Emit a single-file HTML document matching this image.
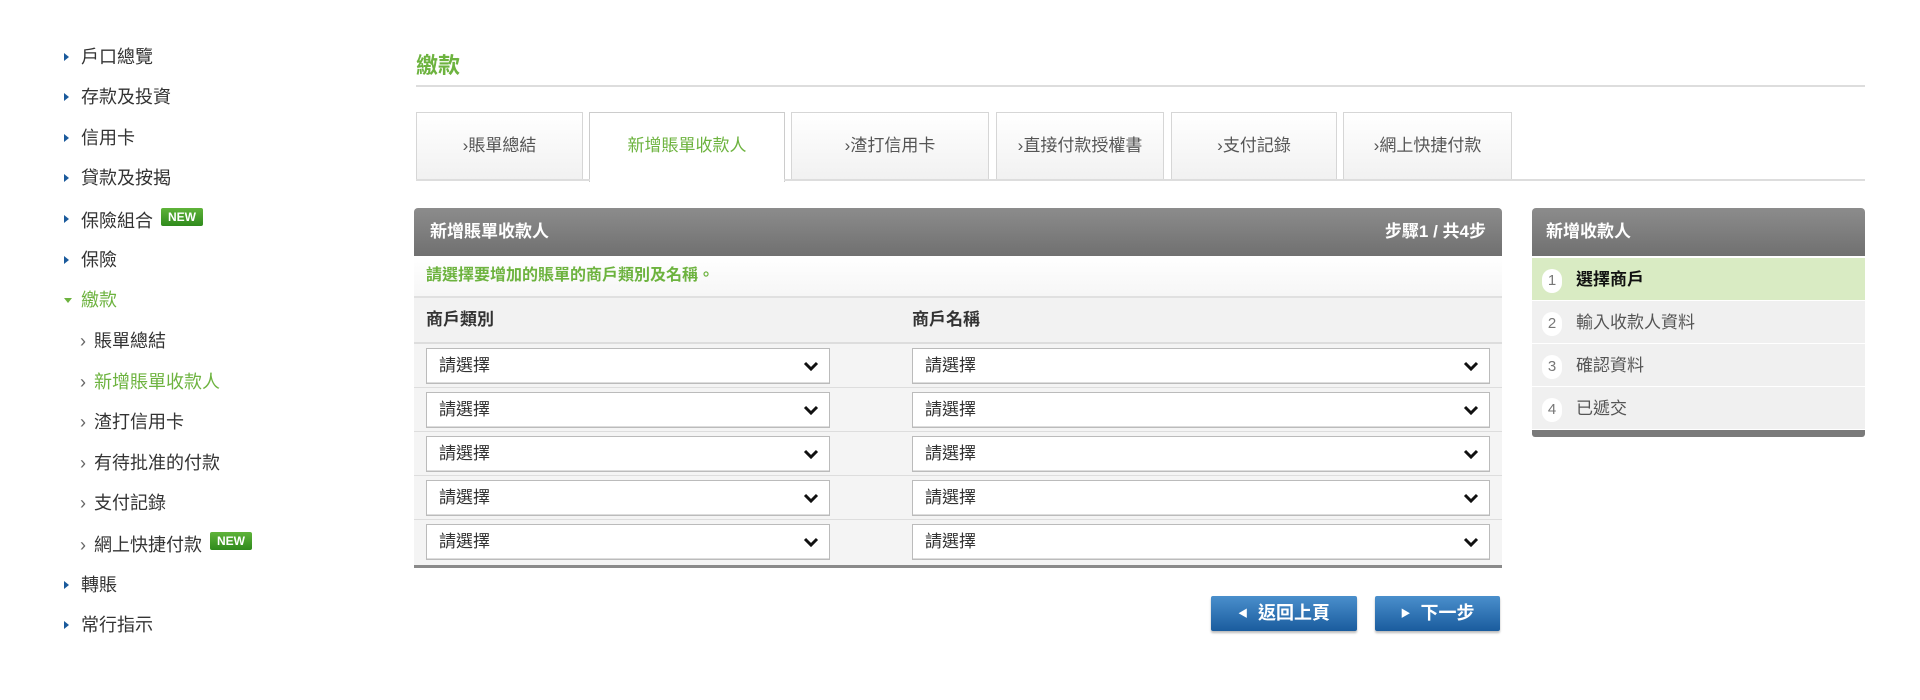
<!DOCTYPE html>
<html><head><meta charset="utf-8"><style>
*{margin:0;padding:0;box-sizing:border-box}
body{width:1920px;height:700px;background:#fff;font-family:"Liberation Sans","Noto Sans CJK TC",sans-serif;color:#333;position:relative;overflow:hidden}
.abs{position:absolute}
.nav{font-size:18px;color:#333;line-height:22px}
.nav .it{position:absolute;left:64px;white-space:nowrap}
.nav .it:before{content:"";position:absolute;left:0;top:7px;border-left:5px solid #1a5a9c;border-top:4px solid transparent;border-bottom:4px solid transparent}
.nav .it span{margin-left:17px}
.nav .open:before{border-top:5px solid #6db33f;border-left:4px solid transparent;border-right:4px solid transparent;border-bottom:0;top:9px;left:0}
.nav .open span{color:#6db33f}
.nav .sub{position:absolute;left:80px;white-space:nowrap}
.nav .sub:before{content:"›";color:#666;margin-right:8px}
.nav .sub.on{color:#6db33f}
.new{display:inline-block;background:linear-gradient(#5fb33a,#2f8a1c);color:#fff;font-size:12px;font-weight:bold;padding:1px 7px;border-radius:2px;vertical-align:6px;margin-left:8px;line-height:16px}
.tab{position:absolute;top:112px;height:68px;border:1px solid #d6d6d6;border-bottom:none;background:linear-gradient(#fff,#f1f1f1);font-size:17px;text-align:center;line-height:66px;color:#555;white-space:nowrap}
.tab.on{background:#fff;color:#6db33f;height:70px;border-color:#ccc}
.hdr{background:linear-gradient(#8c8c8c,#707070);color:#fff;font-weight:bold;font-size:17px;border-radius:4px 4px 0 0}
.sel{position:absolute;height:36px;border:1px solid #bbb;background:#fff;font-size:17px;line-height:34px;padding-left:12px;box-shadow:inset 0 -1px 0 #ddd}
.sel svg{position:absolute;right:10px;top:12px}
.row{position:absolute;left:414px;width:1088px;height:44px;border-bottom:1px solid #ddd;background:#f4f4f4}
.btn{position:absolute;top:596px;height:35px;background:linear-gradient(#4a8fcc,#1a5c9e);color:#fff;font-weight:bold;font-size:18px;line-height:35px;text-align:center;border-radius:2px;box-shadow:0 2px 2px #bbb}
.step{position:absolute;left:1532px;width:333px;height:43px;background:#f0f0f0;border-bottom:1px solid #fff;font-size:17px;line-height:43px;color:#555}
.step b{display:inline-block;width:20px;height:24px;border-radius:10px;background:#fff;color:#777;text-align:center;line-height:24px;font-weight:normal;margin:0 14px 0 10px;font-size:15px;vertical-align:middle}
</style></head><body>
<div class="nav">
<div class="it" style="top:46px"><span>戶口總覽</span></div>
<div class="it" style="top:86px"><span>存款及投資</span></div>
<div class="it" style="top:127px"><span>信用卡</span></div>
<div class="it" style="top:167px"><span>貸款及按揭</span></div>
<div class="it" style="top:208px"><span>保險組合</span><span class="new" style="margin-left:8px">NEW</span></div>
<div class="it" style="top:249px"><span>保險</span></div>
<div class="it open" style="top:289px"><span>繳款</span></div>
<div class="sub" style="top:330px">賬單總結</div>
<div class="sub on" style="top:371px">新增賬單收款人</div>
<div class="sub" style="top:411px">渣打信用卡</div>
<div class="sub" style="top:452px">有待批准的付款</div>
<div class="sub" style="top:492px">支付記錄</div>
<div class="sub" style="top:532px">網上快捷付款<span class="new">NEW</span></div>
<div class="it" style="top:574px"><span>轉賬</span></div>
<div class="it" style="top:614px"><span>常行指示</span></div>
</div>

<div class="abs" style="left:416px;top:48px;font-size:22px;font-weight:bold;color:#6db33f">繳款</div>
<div class="abs" style="left:416px;top:85px;width:1449px;height:2px;background:#ddd"></div>

<div class="tab" style="left:416px;width:167px">›賬單總結</div>
<div class="tab on" style="left:589px;width:196px">新增賬單收款人</div>
<div class="tab" style="left:791px;width:198px">›渣打信用卡</div>
<div class="tab" style="left:996px;width:168px">›直接付款授權書</div>
<div class="tab" style="left:1171px;width:166px">›支付記錄</div>
<div class="tab" style="left:1343px;width:169px">›網上快捷付款</div>
<div class="abs" style="left:416px;top:179px;width:1449px;height:2px;background:#ddd"></div>
<div class="abs" style="left:590px;top:179px;width:194px;height:2px;background:#fff"></div>

<div class="abs hdr" style="left:414px;top:208px;width:1088px;height:48px;line-height:48px;padding:0 16px">新增賬單收款人<span style="float:right">步驟1 / 共4步</span></div>
<div class="abs" style="left:414px;top:256px;width:1088px;height:42px;background:linear-gradient(#fff,#f6f6f6);border-bottom:2px solid #e0e0e0;color:#6db33f;font-weight:bold;font-size:16px;line-height:40px;padding-left:12px">請選擇要增加的賬單的商戶類別及名稱。</div>
<div class="abs" style="left:414px;top:298px;width:1088px;height:46px;background:#f2f2f2;border-bottom:2px solid #ddd;font-weight:bold;font-size:17px;line-height:44px"><span style="position:absolute;left:12px">商戶類別</span><span style="position:absolute;left:498px">商戶名稱</span></div>

<div class="row" style="top:344px"></div>
<div class="row" style="top:388px"></div>
<div class="row" style="top:432px"></div>
<div class="row" style="top:476px"></div>
<div class="row" style="top:520px;border-bottom:3px solid #8a8a8a;height:48px"></div>

<div class="sel" style="left:426px;top:348px;width:404px">請選擇<svg width="16" height="12" viewBox="0 0 16 12"><path d="M2 2l6 6 6-6" stroke="#111" stroke-width="3" fill="none"/></svg></div>
<div class="sel" style="left:912px;top:348px;width:578px">請選擇<svg width="16" height="12" viewBox="0 0 16 12"><path d="M2 2l6 6 6-6" stroke="#111" stroke-width="3" fill="none"/></svg></div>
<div class="sel" style="left:426px;top:392px;width:404px">請選擇<svg width="16" height="12" viewBox="0 0 16 12"><path d="M2 2l6 6 6-6" stroke="#111" stroke-width="3" fill="none"/></svg></div>
<div class="sel" style="left:912px;top:392px;width:578px">請選擇<svg width="16" height="12" viewBox="0 0 16 12"><path d="M2 2l6 6 6-6" stroke="#111" stroke-width="3" fill="none"/></svg></div>
<div class="sel" style="left:426px;top:436px;width:404px">請選擇<svg width="16" height="12" viewBox="0 0 16 12"><path d="M2 2l6 6 6-6" stroke="#111" stroke-width="3" fill="none"/></svg></div>
<div class="sel" style="left:912px;top:436px;width:578px">請選擇<svg width="16" height="12" viewBox="0 0 16 12"><path d="M2 2l6 6 6-6" stroke="#111" stroke-width="3" fill="none"/></svg></div>
<div class="sel" style="left:426px;top:480px;width:404px">請選擇<svg width="16" height="12" viewBox="0 0 16 12"><path d="M2 2l6 6 6-6" stroke="#111" stroke-width="3" fill="none"/></svg></div>
<div class="sel" style="left:912px;top:480px;width:578px">請選擇<svg width="16" height="12" viewBox="0 0 16 12"><path d="M2 2l6 6 6-6" stroke="#111" stroke-width="3" fill="none"/></svg></div>
<div class="sel" style="left:426px;top:524px;width:404px">請選擇<svg width="16" height="12" viewBox="0 0 16 12"><path d="M2 2l6 6 6-6" stroke="#111" stroke-width="3" fill="none"/></svg></div>
<div class="sel" style="left:912px;top:524px;width:578px">請選擇<svg width="16" height="12" viewBox="0 0 16 12"><path d="M2 2l6 6 6-6" stroke="#111" stroke-width="3" fill="none"/></svg></div>

<div class="btn" style="left:1211px;width:146px"><span style="font-size:10px;vertical-align:2px;margin-right:10px">◀</span>返回上頁</div>
<div class="btn" style="left:1375px;width:125px"><span style="font-size:10px;vertical-align:2px;margin-right:10px">▶</span>下一步</div>

<div class="abs hdr" style="left:1532px;top:208px;width:333px;height:48px;line-height:48px;padding-left:14px">新增收款人</div>
<div class="step" style="top:258px;background:#d9ebc3;color:#111;font-weight:bold"><b>1</b>選擇商戶</div>
<div class="step" style="top:301px"><b>2</b>輸入收款人資料</div>
<div class="step" style="top:344px"><b>3</b>確認資料</div>
<div class="step" style="top:387px"><b>4</b>已遞交</div>
<div class="abs" style="left:1532px;top:430px;width:333px;height:7px;background:#7a7a7a;border-radius:0 0 3px 3px"></div>
</body></html>
